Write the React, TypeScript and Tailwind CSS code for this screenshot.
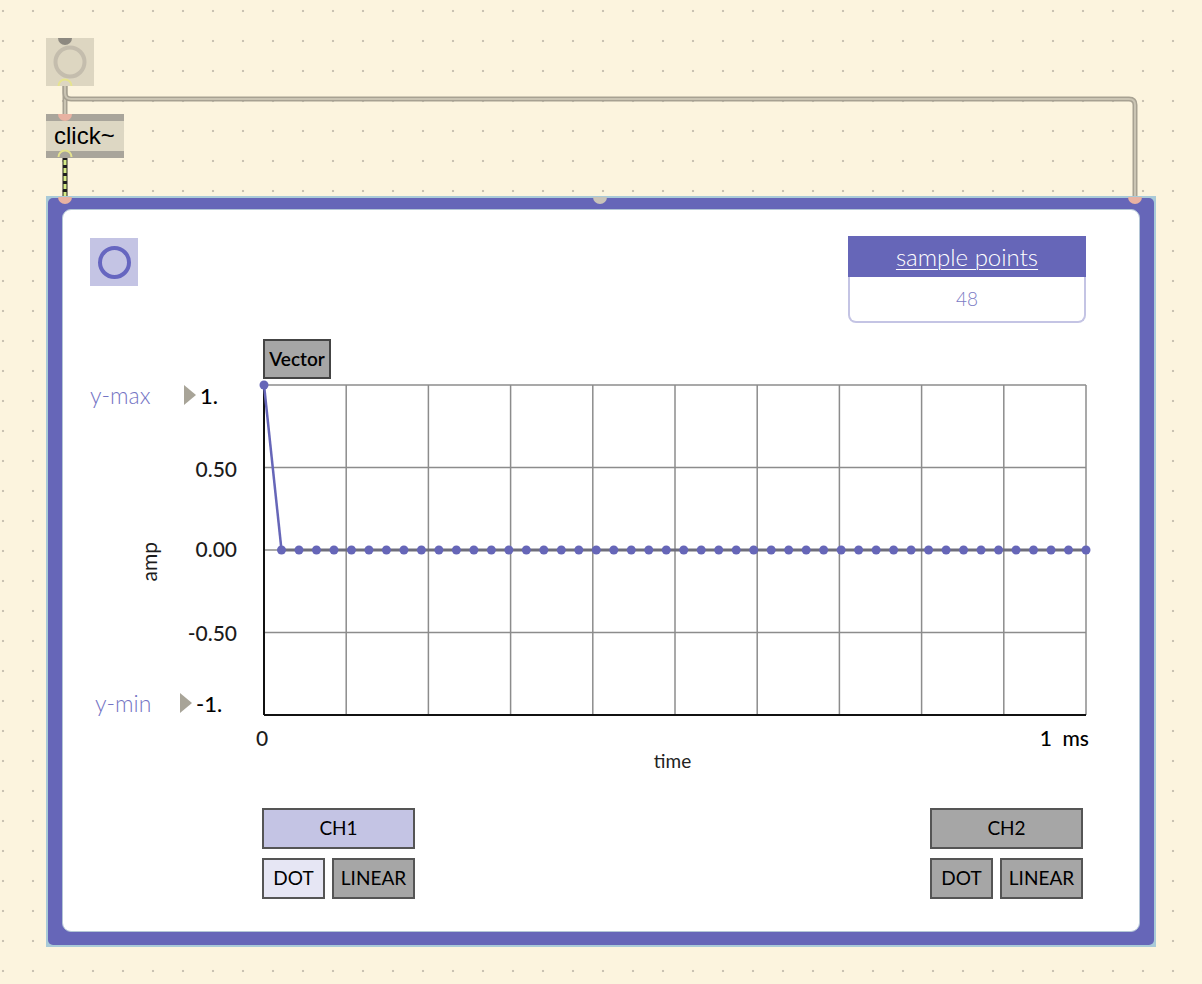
import React from "react";

const PURPLE = "#6666b8";
const W = 822;
const H = 330;
const pts = Array.from({ length: 48 }, (_, i) => ({ x: (i * W) / 47, y: i === 0 ? 0 : H / 2 }));

function Scope() {
  const grid = "#8c8c8c";
  return (
    <svg width={W} height={H} className="block overflow-visible">
      {Array.from({ length: 9 }, (_, k) => (
        <line key={k} x1={((k + 1) * W) / 10} y1={0} x2={((k + 1) * W) / 10} y2={H} stroke={grid} strokeWidth={1.5} />
      ))}
      <line x1={W} y1={0} x2={W} y2={H} stroke={grid} strokeWidth={1.5} />
      <line x1={0} y1={0} x2={W} y2={0} stroke={grid} strokeWidth={1.5} />
      <line x1={0} y1={H / 4} x2={W} y2={H / 4} stroke={grid} strokeWidth={1.5} />
      <line x1={0} y1={H / 2} x2={W} y2={H / 2} stroke={grid} strokeWidth={1.5} />
      <line x1={0} y1={(3 * H) / 4} x2={W} y2={(3 * H) / 4} stroke={grid} strokeWidth={1.5} />
      <line x1={0} y1={0} x2={0} y2={H} stroke="#111" strokeWidth={2} />
      <line x1={0} y1={H} x2={W} y2={H} stroke="#111" strokeWidth={2} />
      <polyline points={pts.slice(0, 2).map((p) => `${p.x},${p.y}`).join(" ")} fill="none" stroke={PURPLE} strokeWidth={2.5} />
      <line x1={pts[1].x} y1={H / 2} x2={W} y2={H / 2} stroke="#6e6e7c" strokeWidth={3} />
      {pts.map((p, i) => (
        <circle key={i} cx={p.x} cy={p.y} r={4.5} fill={PURPLE} />
      ))}
    </svg>
  );
}

function Btn({ children, w, bg }: { children: React.ReactNode; w: string; bg: string }) {
  return (
    <div className={`${w} ${bg} h-[41px] border-2 border-[#555] flex items-center justify-center text-[19px] text-black`}>
      {children}
    </div>
  );
}

function Channel({ name, active }: { name: string; active?: boolean }) {
  return (
    <div className="flex flex-col gap-[9px]">
      <Btn w="w-[153px]" bg={active ? "bg-[#c4c4e4]" : "bg-[#a6a6a6]"}>{name}</Btn>
      <div className="flex gap-[7px]">
        <Btn w="w-[63px]" bg={active ? "bg-[#e6e6f4]" : "bg-[#a6a6a6]"}>DOT</Btn>
        <Btn w="w-[83px]" bg="bg-[#a6a6a6]">LINEAR</Btn>
      </div>
    </div>
  );
}

function Tri() {
  return <span className="block w-0 h-0 border-y-[10px] border-y-transparent border-l-[12px] border-l-[#a8a498]" />;
}

export default function App() {
  return (
    <div className="relative w-[1202px] h-[984px] overflow-hidden bg-[#fcf4de] bg-[radial-gradient(circle,#c9c2b2_1px,transparent_1.6px)] bg-[length:30px_30px] bg-[position:-12px_-4px] font-[Lato,sans-serif]">
      {/* patch cords */}
      <svg className="absolute inset-0" width={1202} height={984}>
        <path d="M65 86 V114" fill="none" stroke="#a7a192" strokeWidth={5} />
        <path d="M65 86 V114" fill="none" stroke="#cac4b3" strokeWidth={2} />
        <path d="M65 86 V93 Q65 99 71 99 H1129 Q1135 99 1135 105 V197" fill="none" stroke="#a7a192" strokeWidth={5} />
        <path d="M65 86 V93 Q65 99 71 99 H1129 Q1135 99 1135 105 V197" fill="none" stroke="#cac4b3" strokeWidth={2} />
        <path d="M65 157 V197" stroke="#1e1e1e" strokeWidth={5} />
        <path d="M65 160 V197" stroke="#d6ec86" strokeWidth={3} strokeDasharray="5 3" />
      </svg>

      {/* toggle */}
      <svg className="absolute left-[46px] top-[38px]" width={48} height={48}>
        <rect width={48} height={48} fill="#ddd6c1" />
        <circle cx={24} cy={24} r={14.5} fill="none" stroke="#c4bdad" strokeWidth={4} />
        <path d="M12 0 A7 7 0 0 0 26 0 Z" fill="#8d8980" />
        <path d="M12.5 48 A6.5 6.5 0 0 1 25.5 48" fill="none" stroke="#e6e48e" strokeWidth={2} />
      </svg>

      {/* click~ */}
      <div className="absolute left-[46px] top-[114px] w-[78px] h-[44px] flex flex-col bg-[#ddd7c3]">
        <div className="h-[7px] bg-[#a9a59b]" />
        <div className="flex-1 flex items-center pl-[8px] text-[24px] leading-none text-black font-['Liberation_Sans',Arial,sans-serif]">click~</div>
        <div className="h-[7px] bg-[#a9a59b]" />
      </div>

      {/* bpatcher */}
      <div className="absolute left-[46px] top-[196px] w-[1110px] h-[751px] bg-[#a9cad8] p-[2px]">
        <div className="w-full h-full rounded-[5px] bg-[#6666b8] pt-[11px] pl-[14px]">
          <div className="w-[1078px] h-[723px] rounded-[9px] bg-white border border-[#b4c6d6] flex flex-col">
            {/* top row */}
            <div className="flex items-start pt-[26px] pl-[27px]">
              <div className="mt-[2px] w-[48px] h-[48px] bg-[#c4c4e4] flex items-center justify-center">
                <div className="w-[33px] h-[33px] rounded-full border-[4px] border-[#6666c0]" />
              </div>
              <div className="ml-auto mr-[53px] w-[238px] flex flex-col">
                <div className="h-[41px] bg-[#6666b8] flex items-center justify-center text-white text-[24px] font-light underline underline-offset-[3px] decoration-1">
                  sample points
                </div>
                <div className="h-[46px] border-2 border-t-0 border-[#c4c4e4] rounded-b-[8px] flex items-center justify-center text-[19px] text-[#7a7ac4] font-light">
                  48
                </div>
              </div>
            </div>

            {/* Vector label */}
            <div className="mt-[16px] ml-[200px] w-[68px] h-[40px] bg-[#a6a6a6] border-2 border-[#444] flex items-center justify-center text-[19px] font-semibold text-black">
              Vector
            </div>

            {/* scope */}
            <div className="mt-[6px] flex">
              <div className="w-[201px] h-[330px] flex flex-col text-[21px] font-medium text-[#1c1c1c]">
                <div className="h-[20px] flex items-center pl-[27px]">
                  <span className="w-[94px] text-[23px] font-light text-[#7474c4]">y-max</span>
                  <Tri />
                  <span className="ml-[4px] text-[22px] text-black">1.</span>
                </div>
                <div className="mt-[54px] h-[20px] flex items-center justify-end pr-[27px]">0.50</div>
                <div className="mt-[60px] h-[20px] flex items-center pr-[27px]">
                  <span className="ml-[75px] translate-y-[13px] text-[21px] font-normal [writing-mode:vertical-rl] rotate-180 leading-none">amp</span>
                  <span className="ml-auto">0.00</span>
                </div>
                <div className="mt-[64px] h-[20px] flex items-center justify-end pr-[27px]">-0.50</div>
                <div className="mt-[50px] h-[20px] flex items-center pl-[32px]">
                  <span className="w-[85px] text-[23px] font-light text-[#7474c4]">y-min</span>
                  <Tri />
                  <span className="ml-[4px] text-[22px] text-black">-1.</span>
                </div>
              </div>
              <Scope />
            </div>

            {/* x labels */}
            <div className="mt-[13px] ml-[193px] w-[833px] h-[20px] flex items-center justify-between text-[21px] font-medium text-[#1c1c1c]">
              <span>0</span>
              <span className="whitespace-pre text-black">1  ms</span>
            </div>
            <div className="mt-[3px] ml-[193px] w-[833px] h-[20px] flex items-center justify-center text-[19px] text-[#222]">time</div>

            {/* channels */}
            <div className="mt-[37px] flex">
              <div className="ml-[199px]">
                <Channel name="CH1" active />
              </div>
              <div className="ml-auto mr-[56px]">
                <Channel name="CH2" />
              </div>
            </div>
          </div>
        </div>
      </div>

      {/* inlets / outlets */}
      <svg className="absolute inset-0 pointer-events-none" width={1202} height={984}>
        <path d="M58 114 A7 7 0 0 0 72 114 Z" fill="#e8b2a2" />
        <path d="M58.5 157 A6.5 6.5 0 0 1 71.5 157" fill="none" stroke="#e6e48e" strokeWidth={2} />
        <path d="M58 197 A7 7 0 0 0 72 197 Z" fill="#e8b2a2" />
        <path d="M593 197 A7 7 0 0 0 607 197 Z" fill="#c9c4ba" />
        <path d="M1128 197 A7 7 0 0 0 1142 197 Z" fill="#e8b2a2" />
      </svg>
    </div>
  );
}
